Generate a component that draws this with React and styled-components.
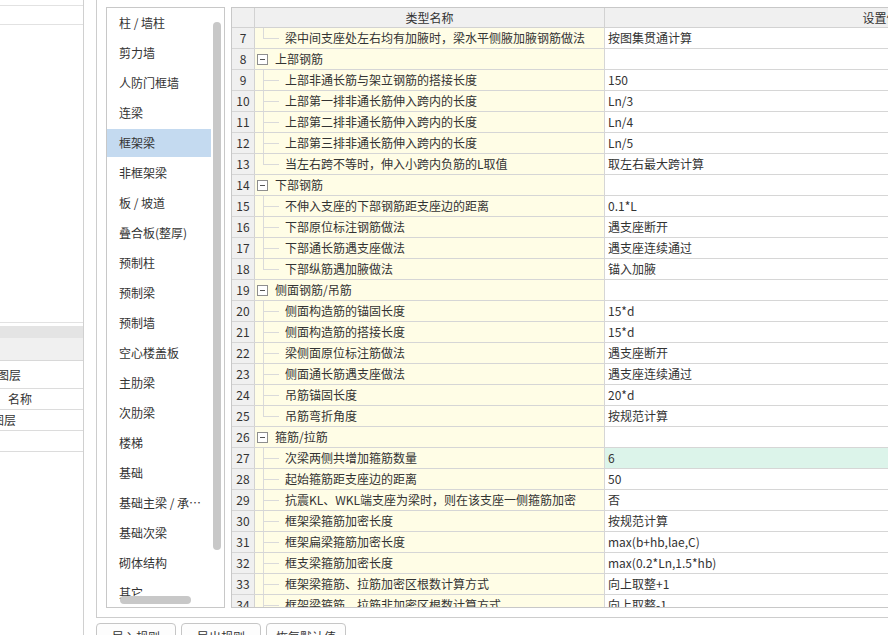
import React from 'react'
import styled, { createGlobalStyle } from 'styled-components'

const categories = [
  '柱 / 墙柱',
  '剪力墙',
  '人防门框墙',
  '连梁',
  '框架梁',
  '非框架梁',
  '板 / 坡道',
  '叠合板(整厚)',
  '预制柱',
  '预制梁',
  '预制墙',
  '空心楼盖板',
  '主肋梁',
  '次肋梁',
  '楼梯',
  '基础',
  '基础主梁 / 承台梁',
  '基础次梁',
  '砌体结构',
  '其它',
]

// group rows have no value, last marks the final child of a group
const rows = [
  { no: 7, name: '梁中间支座处左右均有加腋时，梁水平侧腋加腋钢筋做法', value: '按图集贯通计算', last: true },
  { no: 8, name: '上部钢筋', group: true },
  { no: 9, name: '上部非通长筋与架立钢筋的搭接长度', value: '150' },
  { no: 10, name: '上部第一排非通长筋伸入跨内的长度', value: 'Ln/3' },
  { no: 11, name: '上部第二排非通长筋伸入跨内的长度', value: 'Ln/4' },
  { no: 12, name: '上部第三排非通长筋伸入跨内的长度', value: 'Ln/5' },
  { no: 13, name: '当左右跨不等时，伸入小跨内负筋的L取值', value: '取左右最大跨计算', last: true },
  { no: 14, name: '下部钢筋', group: true },
  { no: 15, name: '不伸入支座的下部钢筋距支座边的距离', value: '0.1*L' },
  { no: 16, name: '下部原位标注钢筋做法', value: '遇支座断开' },
  { no: 17, name: '下部通长筋遇支座做法', value: '遇支座连续通过' },
  { no: 18, name: '下部纵筋遇加腋做法', value: '锚入加腋', last: true },
  { no: 19, name: '侧面钢筋/吊筋', group: true },
  { no: 20, name: '侧面构造筋的锚固长度', value: '15*d' },
  { no: 21, name: '侧面构造筋的搭接长度', value: '15*d' },
  { no: 22, name: '梁侧面原位标注筋做法', value: '遇支座断开' },
  { no: 23, name: '侧面通长筋遇支座做法', value: '遇支座连续通过' },
  { no: 24, name: '吊筋锚固长度', value: '20*d' },
  { no: 25, name: '吊筋弯折角度', value: '按规范计算', last: true },
  { no: 26, name: '箍筋/拉筋', group: true },
  { no: 27, name: '次梁两侧共增加箍筋数量', value: '6', active: true },
  { no: 28, name: '起始箍筋距支座边的距离', value: '50' },
  { no: 29, name: '抗震KL、WKL端支座为梁时，则在该支座一侧箍筋加密', value: '否' },
  { no: 30, name: '框架梁箍筋加密长度', value: '按规范计算' },
  { no: 31, name: '框架扁梁箍筋加密长度', value: 'max(b+hb,lae,C)' },
  { no: 32, name: '框支梁箍筋加密长度', value: 'max(0.2*Ln,1.5*hb)' },
  { no: 33, name: '框架梁箍筋、拉筋加密区根数计算方式', value: '向上取整+1' },
  { no: 34, name: '框架梁箍筋、拉筋非加密区根数计算方式', value: '向上取整-1' },
]

export default function App() {
  return (
    <Screen>
      <GlobalStyle />
      <LeftPanel>
        <TopStrip />
        <LayerHeader>
          <TitleBar />
          <ColumnBar />
        </LayerHeader>
        <LayerRow $h={28} $x={-3}>图层</LayerRow>
        <LayerRow $h={21} $x={8}>名称</LayerRow>
        <LayerRow $h={21} $x={-8}>图层</LayerRow>
        <LayerRow $h={21} $x={0} />
      </LeftPanel>

      <Workspace>
        <Panel>
          <CategoryList>
            {categories.map((item) => (
              <CategoryItem key={item} $selected={item === '框架梁'}>
                {item}
              </CategoryItem>
            ))}
            <VScroll />
            <HScroll />
          </CategoryList>

          <DataTable>
            <HeaderRow>
              <NumCell />
              <NameHead>类型名称</NameHead>
              <ValueHead>设置值</ValueHead>
            </HeaderRow>
            {rows.map((row) => (
              <Row key={row.no}>
                <NumCell>{row.no}</NumCell>
                <NameCell>
                  {row.group ? (
                    <>
                      <ToggleBox />
                      <GroupLabel>{row.name}</GroupLabel>
                    </>
                  ) : (
                    <>
                      <TreeGuide $last={row.last} />
                      <ItemLabel>{row.name}</ItemLabel>
                    </>
                  )}
                </NameCell>
                <ValueCell $active={row.active}>{row.value}</ValueCell>
              </Row>
            ))}
          </DataTable>
        </Panel>

        <ButtonRow>
          <Button>导入规则</Button>
          <Button>导出规则</Button>
          <Button>恢复默认值</Button>
        </ButtonRow>
      </Workspace>
    </Screen>
  )
}

const GlobalStyle = createGlobalStyle`
  html, body {
    margin: 0;
    padding: 0;
    background: #fff;
    overflow: hidden;
  }
  body {
    font-family: 'Noto Sans CJK SC', 'Noto Sans', sans-serif;
    font-size: 12px;
    color: #333;
  }
  * {
    box-sizing: border-box;
  }
`

const Screen = styled.div`
  display: flex;
  width: 888px;
  height: 635px;
  overflow: hidden;
`

const LeftPanel = styled.aside`
  flex: none;
  width: 84px;
  height: 100%;
  margin-right: 12px;
  padding-top: 5px;
  border-right: 1px solid #d0d0d0;
  display: flex;
  flex-direction: column;
  overflow: hidden;
`

const TopStrip = styled.div`
  height: 20px;
  border-top: 1px solid #e2e2e2;
  border-bottom: 1px solid #e2e2e2;
`

const LayerHeader = styled.div`
  margin-top: 297px;
  padding-top: 3px;
  border-top: 1px solid #e2e2e2;
  border-bottom: 1px solid #d8d8d8;
`

const TitleBar = styled.div`
  height: 12px;
  background: #e4e4e4;
`

const ColumnBar = styled.div`
  height: 22px;
  background: #f0f0f0;
`

const LayerRow = styled.div`
  height: ${(p) => p.$h}px;
  line-height: ${(p) => p.$h - 1}px;
  text-indent: ${(p) => p.$x}px;
  border-bottom: 1px solid #dcdcdc;
  white-space: nowrap;
  font-size: 12px;
`

const Workspace = styled.div`
  flex: none;
  width: 1100px;
  display: flex;
  flex-direction: column;
`

const Panel = styled.section`
  height: 618px;
  padding: 7px 0 9px 9px;
  border-left: 1px solid #cdcdcd;
  border-bottom: 1px solid #cdcdcd;
  display: flex;
  gap: 6px;
`

const CategoryList = styled.div`
  flex: none;
  position: relative;
  width: 119px;
  height: 601px;
  padding-top: 1px;
  border: 1px solid #c8c8c8;
  overflow: hidden;
`

const CategoryItem = styled.div`
  width: 104px;
  height: 28px;
  margin-bottom: 2px;
  padding-left: 12px;
  line-height: 28px;
  font-size: 12px;
  white-space: nowrap;
  overflow: hidden;
  text-overflow: ellipsis;
  background: ${(p) => (p.$selected ? '#c4daf0' : 'transparent')};
`

const VScroll = styled.div`
  position: absolute;
  left: 106px;
  top: 14px;
  width: 8px;
  height: 528px;
  border-radius: 4px;
  background: #c8c8c8;
`

const HScroll = styled.div`
  position: absolute;
  left: 13px;
  top: 588px;
  width: 71px;
  height: 8px;
  border-radius: 4px;
  background: #c8c8c8;
`

const DataTable = styled.div`
  flex: none;
  width: 940px;
  height: 601px;
  border: 1px solid #c8c8c8;
  overflow: hidden;
`

const HeaderRow = styled.div`
  display: flex;
  height: 20px;
  line-height: 19px;
  background: #f0f0f0;
  border-bottom: 1px solid #d2d2d2;
`

const Row = styled.div`
  display: flex;
  height: 21px;
  line-height: 20px;
  border-bottom: 1px solid #d6d6d6;
`

const NumCell = styled.div`
  flex: none;
  width: 23px;
  text-align: center;
  background: #f0f0f0;
  border-right: 1px solid #d2d2d2;
`

const NameHead = styled.div`
  flex: none;
  width: 350px;
  text-align: center;
  border-right: 1px solid #d2d2d2;
`

const ValueHead = styled.div`
  flex: none;
  width: 551px;
  text-align: center;
`

const NameCell = styled.div`
  flex: none;
  width: 350px;
  display: flex;
  align-items: center;
  background: #fffde6;
  border-right: 1px solid #d6d6d6;
  white-space: nowrap;
  overflow: hidden;
`

const TreeGuide = styled.span`
  flex: none;
  align-self: stretch;
  width: 16px;
  margin-left: 8px;
  background:
    linear-gradient(#dadada, #dadada) left top / 1px ${(p) => (p.$last ? '50%' : '100%')} no-repeat,
    linear-gradient(#dadada, #dadada) left center / 100% 1px no-repeat;
`

const ItemLabel = styled.span`
  margin-left: 6px;
`

const ToggleBox = styled.span`
  flex: none;
  width: 11px;
  height: 11px;
  margin-left: 2px;
  border: 1px solid #8e8e8e;
  background: linear-gradient(#555, #555) center / 5px 1px no-repeat, #fff;
`

const GroupLabel = styled.span`
  margin-left: 7px;
`

const ValueCell = styled.div`
  flex: none;
  width: 551px;
  padding-left: 3px;
  white-space: nowrap;
  background: ${(p) => (p.$active ? '#dcf4ea' : '#fff')};
`

const ButtonRow = styled.div`
  display: flex;
  gap: 5px;
  margin-top: 5px;
`

const Button = styled.button`
  flex: none;
  width: 80px;
  height: 28px;
  padding: 0;
  font-family: inherit;
  font-size: 12px;
  line-height: 26px;
  color: #333;
  background: #fdfdfd;
  border: 1px solid #c6c6c6;
  border-radius: 4px;
`
